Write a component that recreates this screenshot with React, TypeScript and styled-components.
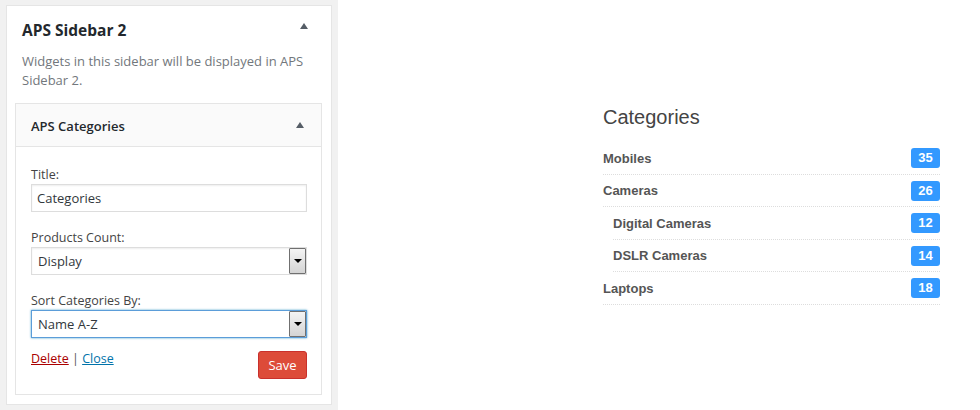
import styled, { createGlobalStyle } from 'styled-components';

const GlobalStyle = createGlobalStyle`
  html, body {
    margin: 0;
    padding: 0;
    background: #fff;
  }
  body {
    font-family: "Open Sans", "Liberation Sans", sans-serif;
  }
`;

const Page = styled.div`
  display: flex;
  width: 980px;
  height: 410px;
  overflow: hidden;
`;

const AdminColumn = styled.div`
  width: 338px;
  height: 410px;
  box-sizing: border-box;
  padding: 5px 6px 5px 6px;
  background: #f1f1f1;
`;

const SidebarCard = styled.div`
  box-sizing: border-box;
  width: 326px;
  height: 400px;
  background: #fff;
  border: 1px solid #e5e5e5;
  display: flex;
  flex-direction: column;
`;

const SidebarHeader = styled.div`
  display: flex;
  justify-content: space-between;
  align-items: flex-start;
  padding: 12px 23px 0 15px;
`;

const SidebarTitle = styled.h2`
  margin: 0;
  font-size: 15.5px;
  line-height: 25px;
  font-weight: 700;
  color: #23282d;
`;

const Arrow = styled.span<{ $offset: number }>`
  width: 0;
  height: 0;
  margin-top: ${({ $offset }) => $offset}px;
  border-left: 4px solid transparent;
  border-right: 4px solid transparent;
  border-bottom: 6px solid #555d66;
`;

const Description = styled.p`
  margin: 9px 15px 0 15px;
  font-size: 13px;
  line-height: 19px;
  color: #72777c;
`;

const Widget = styled.div`
  margin: 13px 9px 0 8px;
  border: 1px solid #e5e5e5;
`;

const WidgetHeader = styled.div`
  display: flex;
  justify-content: space-between;
  align-items: center;
  height: 43px;
  box-sizing: border-box;
  padding: 2px 17px 0 15px;
  background: #fafafa;
  border-bottom: 1px solid #e5e5e5;
`;

const WidgetTitle = styled.h3`
  margin: 0;
  font-size: 13px;
  font-weight: 600;
  color: #23282d;
`;

const WidgetBody = styled.div`
  padding: 19px 14px 15px 15px;
  display: flex;
  flex-direction: column;
  gap: 17px;
`;

const Field = styled.div`
  display: flex;
  flex-direction: column;
`;

const Label = styled.label`
  font-size: 12.5px;
  line-height: 18px;
  color: #444;
`;

const TextInput = styled.div`
  box-sizing: border-box;
  height: 28px;
  border: 1px solid #ddd;
  box-shadow: inset 0 1px 2px rgba(0, 0, 0, 0.07);
  padding: 0 5px;
  display: flex;
  align-items: center;
  font-size: 13px;
  color: #32373c;
  background: #fff;
`;

const SelectBox = styled.div<{ $focused?: boolean }>`
  box-sizing: border-box;
  height: 28px;
  border: 1px solid ${({ $focused }) => ($focused ? '#5b9dd9' : '#ddd')};
  box-shadow: ${({ $focused }) =>
    $focused ? '0 0 2px rgba(30, 140, 190, 0.8)' : 'inset 0 1px 2px rgba(0, 0, 0, 0.07)'};
  display: flex;
  align-items: stretch;
  background: #fff;
`;

const SelectValue = styled.span`
  flex: 1;
  display: flex;
  align-items: center;
  padding: 0 6px;
  font-size: 13px;
  color: #32373c;
`;

const DropButton = styled.span`
  box-sizing: border-box;
  width: 17px;
  border: 1px solid #707070;
  border-radius: 1px;
  background: linear-gradient(#f4f4f4, #d4d4d4);
  display: flex;
  align-items: center;
  justify-content: center;

  &::after {
    content: '';
    width: 0;
    height: 0;
    border-left: 4px solid transparent;
    border-right: 4px solid transparent;
    border-top: 4px solid #000;
  }
`;

const Actions = styled.div`
  display: flex;
  justify-content: space-between;
  align-items: flex-start;
  margin-top: -6px;
`;

const LinkRow = styled.div`
  font-size: 12.5px;
  line-height: 19px;
  color: #555;
`;

const ActionLink = styled.a<{ $danger?: boolean }>`
  color: ${({ $danger }) => ($danger ? '#a00' : '#0073aa')};
  text-decoration: underline;
  cursor: pointer;
`;

const SaveButton = styled.button`
  box-sizing: border-box;
  width: 49px;
  height: 28px;
  margin-top: 2px;
  padding: 0;
  border: 1px solid #c9302c;
  border-radius: 3px;
  background: #dd4b39;
  color: #fff;
  font-family: inherit;
  font-size: 13px;
  cursor: pointer;
`;

const PreviewColumn = styled.div`
  padding: 105px 0 0 265px;
  width: 337px;
`;

const PreviewTitle = styled.h3`
  margin: 0 0 13px 0;
  font-family: "Liberation Sans", Arial, sans-serif;
  font-size: 20px;
  line-height: 24px;
  font-weight: normal;
  color: #444;
`;

const CategoryList = styled.ul`
  list-style: none;
  margin: 0;
  padding: 0;
  font-family: "Liberation Sans", Arial, sans-serif;
`;

const CategoryRow = styled.li<{ $child?: boolean }>`
  display: flex;
  justify-content: space-between;
  align-items: center;
  margin-left: ${({ $child }) => ($child ? 10 : 0)}px;
  padding: 6px 0 5.5px 0;
  border-bottom: 1px dotted #ddd;
`;

const CategoryName = styled.span`
  font-size: 13px;
  font-weight: bold;
  color: #555;
`;

const CountBadge = styled.span`
  box-sizing: border-box;
  height: 20px;
  min-width: 29px;
  padding: 0 7px;
  border-radius: 3px;
  background: #3399ff;
  color: #fff;
  font-size: 13px;
  font-weight: bold;
  line-height: 20px;
  text-align: center;
`;

const categories = [
  { name: 'Mobiles', count: 35, child: false },
  { name: 'Cameras', count: 26, child: false },
  { name: 'Digital Cameras', count: 12, child: true },
  { name: 'DSLR Cameras', count: 14, child: true },
  { name: 'Laptops', count: 18, child: false },
];

export default function App() {
  return (
    <Page>
      <GlobalStyle />
      <AdminColumn>
        <SidebarCard>
          <SidebarHeader>
            <SidebarTitle>APS Sidebar 2</SidebarTitle>
            <Arrow $offset={5} />
          </SidebarHeader>
          <Description>Widgets in this sidebar will be displayed in APS Sidebar 2.</Description>
          <Widget>
            <WidgetHeader>
              <WidgetTitle>APS Categories</WidgetTitle>
              <Arrow $offset={-2} />
            </WidgetHeader>
            <WidgetBody>
              <Field>
                <Label>Title:</Label>
                <TextInput>Categories</TextInput>
              </Field>
              <Field>
                <Label>Products Count:</Label>
                <SelectBox>
                  <SelectValue>Display</SelectValue>
                  <DropButton />
                </SelectBox>
              </Field>
              <Field>
                <Label>Sort Categories By:</Label>
                <SelectBox $focused>
                  <SelectValue>Name A-Z</SelectValue>
                  <DropButton />
                </SelectBox>
              </Field>
              <Actions>
                <LinkRow>
                  <ActionLink $danger>Delete</ActionLink> | <ActionLink>Close</ActionLink>
                </LinkRow>
                <SaveButton>Save</SaveButton>
              </Actions>
            </WidgetBody>
          </Widget>
        </SidebarCard>
      </AdminColumn>
      <PreviewColumn>
        <PreviewTitle>Categories</PreviewTitle>
        <CategoryList>
          {categories.map((c) => (
            <CategoryRow key={c.name} $child={c.child}>
              <CategoryName>{c.name}</CategoryName>
              <CountBadge>{c.count}</CountBadge>
            </CategoryRow>
          ))}
        </CategoryList>
      </PreviewColumn>
    </Page>
  );
}
